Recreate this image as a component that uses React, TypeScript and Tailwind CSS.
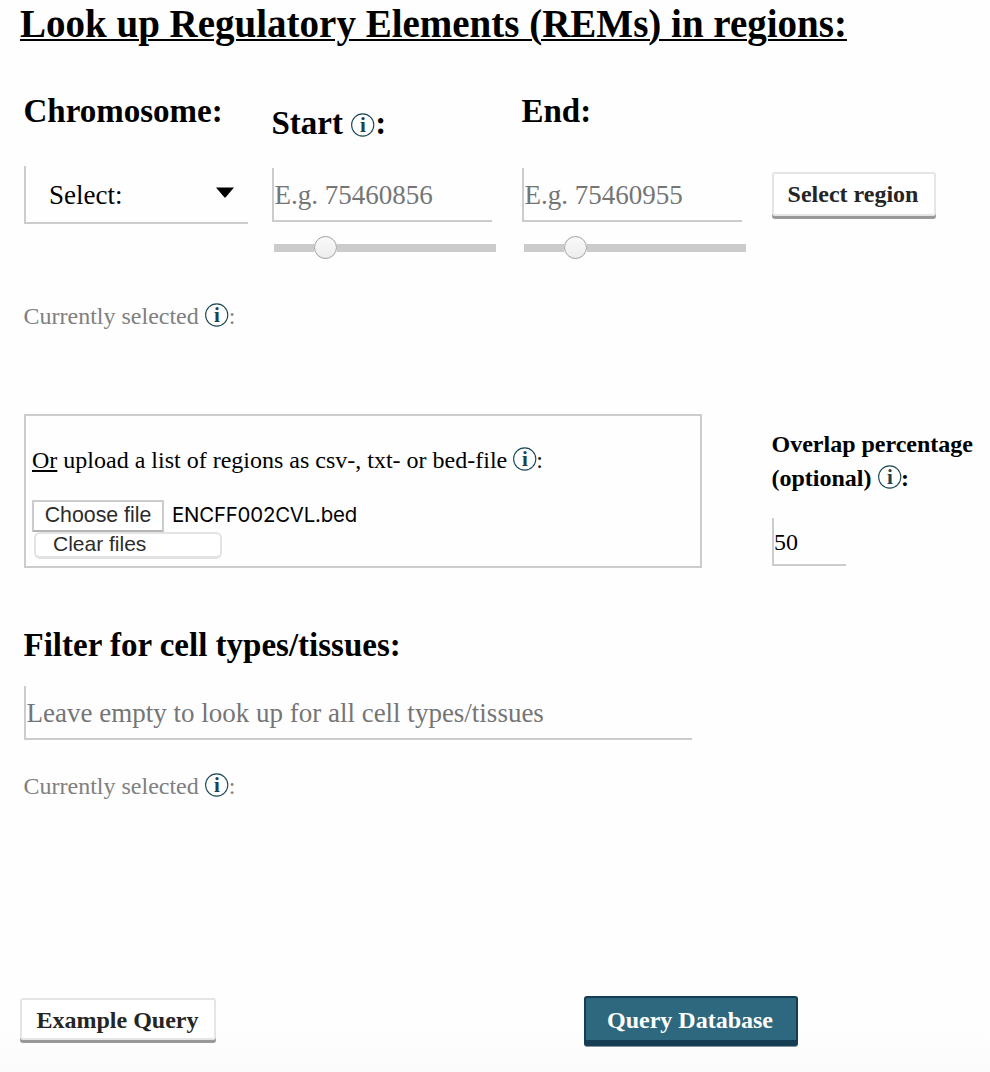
import React from "react";

function InfoIcon({ className = "" }: { className?: string }) {
  return (
    <svg
      viewBox="0 0 24 24"
      className={`inline-block h-6 w-6 overflow-visible align-baseline ${className}`}
      role="img"
      aria-label="Info"
    >
      <circle cx="11.7" cy="12" r="11.1" fill="none" stroke="#1c4854" strokeWidth="1.1" />
      <text
        x="11.8"
        y="18.6"
        textAnchor="middle"
        fill="#1c4450"
        className="font-['Liberation_Serif',serif] text-[21px] font-bold"
      >
        i
      </text>
    </svg>
  );
}

function RangeField({ placeholder, label }: { placeholder: string; label: string }) {
  return (
    <div className="w-[224px]">
      <input
        aria-label={label}
        placeholder={placeholder}
        className="block h-[54px] w-[220px] border-b-2 border-l-2 border-[#ccc] bg-transparent p-0 pt-[2px] pl-[0.5px] text-[27px] placeholder:text-[#757575] outline-none"
      />
      <div className="mt-[14px] ml-[2px] flex h-[23px] w-[222px] items-center">
        <div className="h-2 w-10 bg-[#cbcbcb]" />
        <div className="h-[23px] w-[23px] shrink-0 rounded-full border border-[#a0a0a0] bg-linear-to-b from-[#f9f9f9] to-[#ededed]" />
        <div className="h-2 grow bg-[#cbcbcb]" />
      </div>
    </div>
  );
}

function Selected() {
  return (
    <p className="-ml-[0.5px] h-7 whitespace-nowrap text-2xl leading-7 text-[#808080]">
      Currently selected <InfoIcon className="-mb-[3px]" />:
    </p>
  );
}

export default function App() {
  return (
    <main className="h-[1072px] w-[990px] overflow-hidden bg-white bg-linear-to-b from-[#fefefe] from-96% to-[#fbfbfb] font-['Liberation_Serif',serif] text-black">
      <h2 className="ml-[20px] h-[92px] whitespace-nowrap pt-[2px] text-[39px] leading-[44px] font-bold underline decoration-2 underline-offset-[2px]">
        Look up Regulatory Elements (REMs) in regions:
      </h2>

      <section className="ml-6 flex h-[210px]">
        <div className="w-[248px] pt-px">
          <h3 className="-ml-[0.5px] h-[73px] text-[33px] leading-[36px] font-bold">Chromosome:</h3>
          <div className="flex h-[58px] w-[224px] items-center justify-between border-b-2 border-l-2 border-[#ccc] pt-[2px] pr-[14px] pl-[23px] text-[27px]">
            <span>Select:</span>
            <svg viewBox="0 0 18 11" className="-mt-[6px] h-[11px] w-[18px]">
              <path d="M0 0.5H18L9.5 10.5H8.5Z" fill="#000" />
            </svg>
          </div>
        </div>
        <div className="w-[250px] pt-[13px]">
          <h3 className="-ml-[0.5px] h-[63px] text-[33px] leading-[36px] font-bold">
            Start <InfoIcon className="-mb-[3px]" />:
          </h3>
          <RangeField label="Start" placeholder="E.g. 75460856" />
        </div>
        <div className="w-[250px] pt-px">
          <h3 className="-ml-[0.5px] h-[75px] text-[33px] leading-[36px] font-bold">End:</h3>
          <RangeField label="End" placeholder="E.g. 75460955" />
        </div>
        <div className="pt-[80px]">
          <button className="block h-[44px] w-[164px] rounded-[3px] border-2 border-[#e5e5e5] bg-white pr-[2px] pb-px text-2xl leading-none font-bold whitespace-nowrap text-[#252525] shadow-[0_3px_0_#999]">
            Select region
          </button>
        </div>
      </section>

      <section className="ml-6 h-[112px]">
        <Selected />
      </section>

      <section className="ml-6 flex h-[213px]">
        <div className="h-[154px] w-[678px] border-2 border-[#ccc] pt-[29px] pl-[6px]">
          <p className="h-[55px] text-2xl leading-[30px] whitespace-nowrap">
            <span className="underline decoration-2 underline-offset-[2px]">Or</span> upload a list of regions as
            csv-, txt- or bed-file <InfoIcon className="-mr-px -mb-[3px]" />:
          </p>
          <div className="flex h-8 items-center">
            <button className="h-8 w-[132px] border-2 border-[#ccc] border-b-[#b5b5b5] bg-white font-['Liberation_Sans',sans-serif] text-[21.33px] leading-none whitespace-nowrap text-[#2c2c2c]">
              Choose file
            </button>
            <span className="ml-2 pb-[2px] font-[Inter,sans-serif] text-[20.4px] leading-none tracking-[-0.2px]">
              ENCFF002CVL.bed
            </span>
          </div>
          <button className="ml-[2px] block h-[27px] w-[188px] rounded-md border-2 border-b-3 border-[#e3e3e3] bg-white pb-[2px] pl-[17px] text-left font-['Liberation_Sans',sans-serif] text-[21px] leading-[20px] text-[#2c2c2c]">
            Clear files
          </button>
        </div>
        <div className="ml-[69.5px] pt-[13px]">
          <p className="h-[91px] text-2xl leading-[34px] font-bold whitespace-nowrap">
            Overlap percentage
            <br />
            (optional) <InfoIcon className="-mr-[0.5px] -mb-[3px]" />:
          </p>
          <input
            aria-label="Overlap percentage"
            defaultValue="50"
            className="ml-[0.5px] block h-[48px] w-[74px] border-b-2 border-l-2 border-[#ccc] bg-transparent p-0 pt-[2px] text-2xl outline-none"
          />
        </div>
      </section>

      <section className="ml-6 h-[371px]">
        <h3 className="-ml-[0.5px] h-[59px] text-[33px] leading-[36px] font-bold">Filter for cell types/tissues:</h3>
        <input
          aria-label="Cell types or tissues"
          placeholder="Leave empty to look up for all cell types/tissues"
          className="mb-[32px] block h-[54px] w-[668px] border-b-2 border-l-2 border-[#ccc] bg-transparent p-0 pt-[2px] pl-[0.5px] text-[27px] placeholder:text-[#757575] outline-none"
        />
        <Selected />
      </section>

      <footer className="ml-5 flex">
        <button className="block h-[42px] w-[196px] rounded-[3px] border-2 border-[#e5e5e5] bg-white pt-[2px] pr-px text-2xl leading-none font-bold whitespace-nowrap text-[#252525] shadow-[0_3px_0_#999]">
          Example Query
        </button>
        <button className="-mt-[2px] ml-[368px] block h-[50px] w-[214px] rounded-[3px] border-2 border-b-6 border-[#153e54] bg-[#2d687e] pt-[2px] pr-[2px] text-2xl leading-none font-bold whitespace-nowrap text-white shadow-[0_1px_0_#8194a0]">
          Query Database
        </button>
      </footer>
    </main>
  );
}
